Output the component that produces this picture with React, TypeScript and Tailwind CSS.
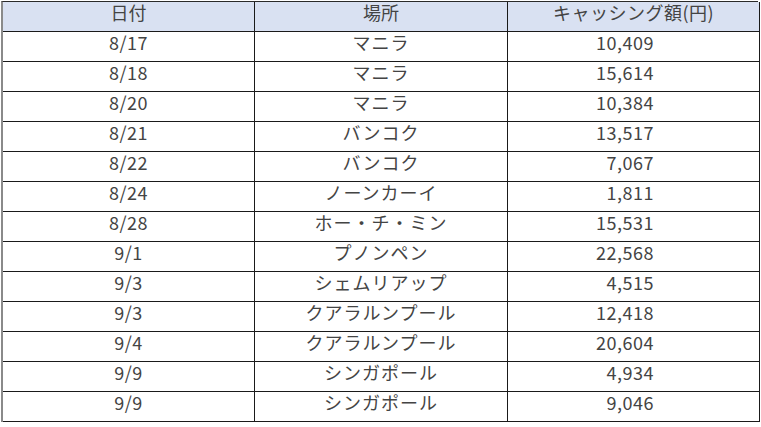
const rows: [string, string, string][] = [
  ["8/17", "マニラ", "10,409"],
  ["8/18", "マニラ", "15,614"],
  ["8/20", "マニラ", "10,384"],
  ["8/21", "バンコク", "13,517"],
  ["8/22", "バンコク", "7,067"],
  ["8/24", "ノーンカーイ", "1,811"],
  ["8/28", "ホー・チ・ミン", "15,531"],
  ["9/1", "プノンペン", "22,568"],
  ["9/3", "シェムリアップ", "4,515"],
  ["9/3", "クアラルンプール", "12,418"],
  ["9/4", "クアラルンプール", "20,604"],
  ["9/9", "シンガポール", "4,934"],
  ["9/9", "シンガポール", "9,046"],
];

const cell = "flex h-[30px] items-center border-r border-b border-[#1a1a1a] pb-[8px]";

export default function App() {
  return (
    <div className="h-[427px] w-[761px] bg-white pl-[1px] pt-[1px] font-['Noto_Sans_CJK_JP','Noto_Sans',sans-serif] text-[18px] text-[#444444]">
      <div className="grid w-[757px] grid-cols-[252px_253px_252px] border-t border-l-2 border-t-[#2a2a2a] border-l-[#8a8a8a]">
        <div className={`${cell} justify-center bg-[#d9e1f2]`}>日付</div>
        <div className={`${cell} justify-center bg-[#d9e1f2]`}>場所</div>
        <div className={`${cell} justify-center bg-[#d9e1f2] tracking-[0.5px]`}>キャッシング額(円)</div>
        {rows.map(([d, p, a], i) => (
          <div key={i} className="contents">
            <div className={`${cell} justify-center tracking-[0.5px]`}>{d}</div>
            <div className={`${cell} justify-center tracking-[1px]`}>{p}</div>
            <div className={`${cell} justify-end pr-[105px] tracking-[0.5px]`}>{a}</div>
          </div>
        ))}
      </div>
    </div>
  );
}
